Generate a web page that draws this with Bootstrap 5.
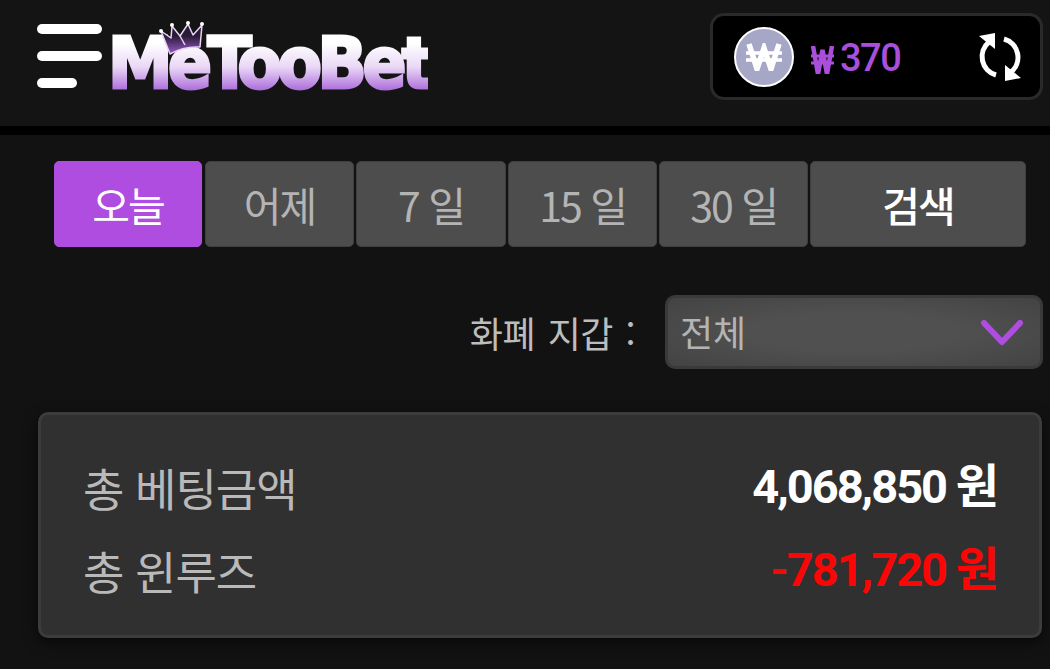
<!DOCTYPE html>
<html lang="ko">
<head>
    <meta charset="UTF-8">
    <meta name="viewport" content="width=device-width, initial-scale=1.0">
    <title>MeTooBet</title>
    <link href="https://cdn.jsdelivr.net/npm/bootstrap@5.3.0/dist/css/bootstrap.min.css" rel="stylesheet">
    <script src="https://cdn.jsdelivr.net/npm/bootstrap@5.3.0/dist/js/bootstrap.bundle.min.js"></script>
    <style>
        html, body {
            height: 100%;
        }
        body {
            background-color: #121212;
            font-family: "Noto Sans CJK KR", "Noto Sans", sans-serif;
            overflow: hidden;
        }
        .top-bar {
            height: 135px;
            background-color: #141414;
            border-bottom: 9px solid #000;
            padding: 13px 7px 0 37px;
        }
        .burger {
            width: 65px;
            gap: 17px;
            margin-top: 11px;
        }
        .burger span {
            display: block;
            height: 10px;
            border-radius: 5px;
            background-color: #fff;
        }
        .burger span:last-child {
            width: 40px;
        }
        .logo-box {
            position: relative;
            margin-left: 7px;
            width: 325px;
            height: 80px;
        }
        .logo-text {
            position: absolute;
            left: -1px;
            top: 10px;
            font-family: "DejaVu Sans", sans-serif;
            font-stretch: condensed;
            font-weight: 700;
            font-size: 72px;
            line-height: 80px;
            letter-spacing: -4.5px;
            white-space: nowrap;
            -webkit-text-stroke: 3px transparent;
            background: linear-gradient(#ffffff 25%, #ead8f6 55%, #a45fd8 88%);
            -webkit-background-clip: text;
            background-clip: text;
            color: transparent;
        }
        .logo-crown {
            position: absolute;
            left: 50px;
            top: 7px;
            width: 46px;
            height: 36px;
        }
        .wallet {
            width: 333px;
            height: 87px;
            background-color: #000;
            border: 3px solid #2a2a2a;
            border-radius: 14px;
            padding: 0 17px 0 21px;
        }
        .won-coin {
            width: 60px;
            height: 60px;
            border-radius: 50%;
            background-color: #a6a6c6;
            border: 2px solid #fff;
            color: #fff;
        }
        .wallet-amount {
            color: #a94fdc;
            font-family: "Roboto", "Noto Sans CJK KR", sans-serif;
            font-weight: 500;
            font-size: 38px;
            margin: 3px 0 0 17px;
            letter-spacing: -1.5px;
        }
        .wallet-amount svg {
            margin-right: 6px;
            vertical-align: -3px;
        }
        .period-row {
            margin: 26px 24px 0 54px;
            gap: 2px;
        }
        .period-btn {
            width: 149px;
            height: 86px;
            flex: 0 0 auto;
            background-color: #4d4d4d;
            border: 1px solid #3f3f3f;
            border-radius: 5px;
            color: #b4b4b4;
            font-size: 41px;
            letter-spacing: -2px;
            padding: 1px 0 0;
        }
        .period-btn.is-on {
            width: 148px;
            margin-right: 1px;
            background-color: #ae4de0;
            border-color: #ae4de0;
            color: #fff;
        }
        .period-btn.is-wide {
            width: 150px;
        }
        .period-btn.is-search {
            width: 216px;
            color: #fff;
            font-weight: 500;
        }
        .wallet-filter {
            margin: 48px 7px 0 0;
        }
        .wallet-filter label {
            color: #bdbdbd;
            font-size: 36px;
            letter-spacing: -.5px;
            word-spacing: 3px;
            margin-right: 30px;
        }
        .coin-select {
            position: relative;
            width: 378px;
            height: 74px;
            background: radial-gradient(ellipse at center, #505050 40%, #434343 100%);
            border: 3px solid #3a3a3a;
            border-radius: 10px;
            color: #b4b4b4;
            font-size: 36px;
            line-height: 66px;
            padding-left: 12px;
        }
        .coin-select svg {
            position: absolute;
            right: 17px;
            top: 22px;
        }
        .sum-box {
            margin: 43px 8px 0 38px;
            height: 226px;
            background-color: #303030;
            border: 3px solid #3c3c3c;
            border-radius: 10px;
            padding: 31px 42px 0 42px;
            box-shadow: 0 4px 14px rgba(0, 0, 0, .6);
        }
        .sum-line {
            height: 83px;
            font-size: 45px;
            letter-spacing: -1px;
            color: #b9b9b9;
        }
        .sum-value {
            color: #fff;
            font-family: "Roboto", "Noto Sans CJK KR", sans-serif;
            font-weight: 700;
            font-size: 47px;
            letter-spacing: -2px;
        }
        .sum-value.is-loss {
            color: #fb0606;
        }
    </style>
</head>
<body>

    <!-- Top bar -->
    <header class="top-bar d-flex justify-content-between align-items-start">
        <div class="d-flex align-items-start">
            <div class="burger d-flex flex-column">
                <span></span>
                <span></span>
                <span></span>
            </div>
            <div class="logo-box">
                <div class="logo-text">MeTooBet</div>
                <svg class="logo-crown" viewBox="0 0 46 36">
                    <defs>
                        <linearGradient id="crownFill" x1="0" y1="0" x2="0" y2="1">
                            <stop offset="0.4" stop-color="#2a1a38"/>
                            <stop offset="1" stop-color="#9a5cc8"/>
                        </linearGradient>
                    </defs>
                    <path d="M11 34 L2 11 L12 18 L13 6 L21 16 L29 4 L34 15 L43 5 L41 27 Q25 26 11 34Z" fill="url(#crownFill)" stroke="#e6d4f2" stroke-width="1.500" stroke-linejoin="round"/>
                    <path d="M21 16 L26 25" stroke="#e6d4f2" stroke-width="1.500"/>
                    <circle cx="2" cy="11" r="2" fill="#fff"/>
                    <circle cx="13" cy="5" r="2" fill="#fff"/>
                    <circle cx="29" cy="3" r="2" fill="#fff"/>
                    <circle cx="43" cy="4" r="2" fill="#fff"/>
                </svg>
            </div>
        </div>
        <div class="wallet d-flex align-items-center">
            <div class="won-coin d-flex align-items-center justify-content-center">
                <svg width="36" height="28" viewBox="0 0 36 28" fill="none" stroke="#fff" stroke-width="5.500">
                    <path d="M3 1 L11 26 L18 5 L25 26 L33 1"/>
                    <path d="M0 10 H36 M0 17 H36" stroke-width="3.500"/>
                </svg>
            </div>
            <div class="wallet-amount">
                <svg width="23" height="28" viewBox="0 0 23 28" fill="none" stroke="#a94fdc" stroke-width="4.500">
                    <path d="M2 0 L7 28 L11.500 4 L16 28 L21 0"/>
                    <path d="M0 10 H23 M0 17 H23" stroke-width="3"/>
                </svg>370
            </div>
            <svg class="ms-auto" width="46" height="48" viewBox="0 0 46 48" fill="none">
                <path d="M27 6 A19 19 0 0 1 34 39" stroke="#fff" stroke-width="5"/>
                <path d="M19 42 A19 19 0 0 1 12 9" stroke="#fff" stroke-width="5"/>
                <path d="M18 0 L18 16 L2 3Z" fill="#fff"/>
                <path d="M28 48 L28 32 L44 45Z" fill="#fff"/>
            </svg>
        </div>
    </header>

    <!-- Period buttons -->
    <div class="period-row d-flex">
        <button type="button" class="btn period-btn is-on">오늘</button>
        <button type="button" class="btn period-btn">어제</button>
        <button type="button" class="btn period-btn is-wide">7 일</button>
        <button type="button" class="btn period-btn">15 일</button>
        <button type="button" class="btn period-btn">30 일</button>
        <button type="button" class="btn period-btn is-search">검색</button>
    </div>

    <!-- Wallet filter -->
    <div class="wallet-filter d-flex justify-content-end align-items-center">
        <label>화폐 지갑 :</label>
        <div class="coin-select">
            전체
            <svg width="42" height="26" viewBox="0 0 42 26" fill="none" stroke="#ae4de0" stroke-width="6" stroke-linecap="round" stroke-linejoin="round">
                <path d="M3 3 L21 22 L39 3"/>
            </svg>
        </div>
    </div>

    <!-- Totals -->
    <div class="sum-box">
        <div class="sum-line d-flex justify-content-between align-items-center">
            <span>총 베팅금액</span>
            <span class="sum-value">4,068,850 원</span>
        </div>
        <div class="sum-line d-flex justify-content-between align-items-center">
            <span>총 윈루즈</span>
            <span class="sum-value is-loss">-781,720 원</span>
        </div>
    </div>

</body>
</html>
